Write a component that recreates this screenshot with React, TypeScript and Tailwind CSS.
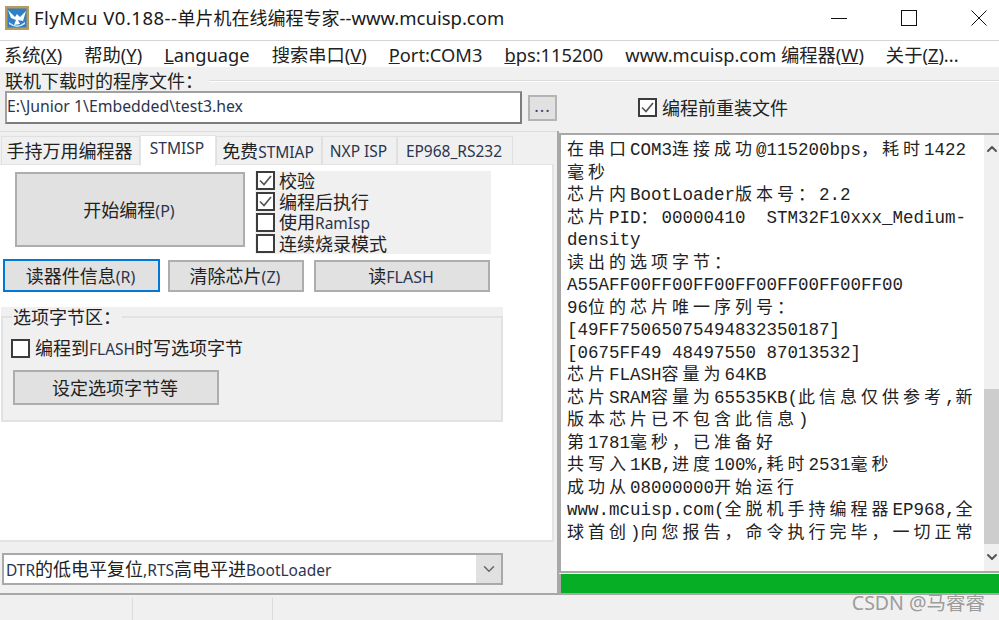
import React from 'react';
import { ChevronDown, ChevronUp } from 'lucide-react';

const sans = 'font-["Noto_Sans","Noto_Sans_CJK_SC",sans-serif]';

const logLines = [
  '在串口COM3连接成功@115200bps，耗时1422',
  '毫秒',
  '芯片内BootLoader版本号：2.2',
  '芯片PID：00000410  STM32F10xxx_Medium-',
  'density',
  '读出的选项字节：',
  'A55AFF00FF00FF00FF00FF00FF00FF00',
  '96位的芯片唯一序列号：',
  '[49FF75065075494832350187]',
  '[0675FF49 48497550 87013532]',
  '芯片FLASH容量为64KB',
  '芯片SRAM容量为65535KB(此信息仅供参考,新',
  '版本芯片已不包含此信息)',
  '第1781毫秒，已准备好',
  '共写入1KB,进度100%,耗时2531毫秒',
  '成功从08000000开始运行',
  'www.mcuisp.com(全脱机手持编程器EP968,全',
  '球首创)向您报告，命令执行完毕，一切正常',
];

// CJK and latin runs need different sizes, the old app mixes two fonts
function Runs({ text, cjk, latin }: { text: string; cjk: string; latin: string }) {
  const parts = text.split(/([\u2E80-\uFFEF]+)/).filter(Boolean);
  return (
    <>
      {parts.map((p, i) => (
        <span key={i} className={/[\u2E80-\uFFEF]/.test(p) ? cjk : latin}>
          {p}
        </span>
      ))}
    </>
  );
}

function Label({ text }: { text: string }) {
  return <Runs text={text} cjk="inline-block text-[18px]" latin="inline-block text-[15.5px] text-[#2b3550]" />;
}

function Check({ checked }: { checked?: boolean }) {
  return (
    <span className="flex h-[19px] w-[19px] shrink-0 items-center justify-center border-2 border-[#3c3c3c] bg-white">
      {checked && (
        <svg width="15" height="15" viewBox="0 0 15 15" fill="none">
          <path d="M2 7.5 L6 11.5 L13 3" stroke="#555" strokeWidth="1.7" />
        </svg>
      )}
    </span>
  );
}

function CheckRow({ text, checked }: { text: string; checked?: boolean }) {
  return (
    <div className="flex h-[21px] items-center gap-[5px] leading-none">
      <Check checked={checked} />
      <span className="-ml-[1px]">
        <Label text={text} />
      </span>
    </div>
  );
}

function Btn({ text, className }: { text: string; className: string }) {
  return (
    <button className={`flex items-center justify-center border-2 border-[#adadad] bg-[#e1e1e1] pr-[2px] leading-none ${className}`}>
      <span>
        <Runs text={text} cjk="text-[18px]" latin="text-[16px] text-[#2b3550]" />
      </span>
    </button>
  );
}

function Tab({ text, className, active }: { text: string; className: string; active?: boolean }) {
  if (active) {
    return (
      <div className={`z-10 flex h-[31px] items-center justify-center border-x border-t border-[#e4e4e4] bg-white pr-[2px] pb-[5px] leading-none ${className}`}>
        <span>
          <Label text={text} />
        </span>
      </div>
    );
  }
  return (
    <div className={`mt-[1px] flex h-[29px] items-center justify-center border border-b-0 border-[#e0e0e0] bg-[#f0f0f0] pr-[2px] leading-none ${className}`}>
      <span>
        <Label text={text} />
      </span>
    </div>
  );
}

function Logo() {
  return (
    <svg width="24" height="24" viewBox="0 0 24 24" className="shrink-0">
      <rect x="0" y="0" width="24" height="24" fill="#b89b5e" />
      <rect x="2.5" y="2.5" width="19" height="19" fill="#2f7fc4" />
      <path d="M3 4 L10 11 L12 8 L15 11 L21 5 L18 15 L13 14 L15 18 L9 19 L11 14 L6 12 Z" fill="#fff" />
      <path d="M4 16 Q12 23 20 16 L20 18 Q12 24 4 18 Z" fill="#d6e8f6" />
    </svg>
  );
}

export default function App() {
  return (
    <div className={`flex h-[620px] w-[999px] flex-col overflow-hidden bg-[#f0f0f0] text-[#222] ${sans}`}>
      {/* title bar */}
      <div className="flex h-[41px] items-center border-b border-[#d4d4d4] bg-white pl-[5px] pb-[5px]">
        <Logo />
        <span className="ml-[5px] text-[18.5px] whitespace-nowrap text-[#1a1a1a]">
          <span className="tracking-[0.5px]">FlyMcu V0.188--</span>
          <span className="text-[18px]">单片机在线编程专家</span>
          <span>--www.mcuisp.com</span>
        </span>
        <div className="ml-auto mr-[12px] flex items-center gap-[54px]">
          <svg width="16" height="16" viewBox="0 0 16 16" className="block"><path d="M0 8.5 H16" stroke="#111" /></svg>
          <svg width="16" height="16" viewBox="0 0 16 16" className="block"><rect x="0.5" y="0.5" width="15" height="15" fill="none" stroke="#111" /></svg>
          <svg width="16" height="16" viewBox="0 0 16 16" className="block"><path d="M0.5 0.5 L15.5 15.5 M15.5 0.5 L0.5 15.5" stroke="#111" /></svg>
        </div>
      </div>

      {/* menu */}
      <div className="flex h-[26px] items-center gap-[22px] bg-white pl-[4px] pt-[1px] text-[18.3px] whitespace-nowrap text-[#222]">
        <span>系统(<u>X</u>)</span>
        <span>帮助(<u>Y</u>)</span>
        <span><u>L</u>anguage</span>
        <span>搜索串口(<u>V</u>)</span>
        <span><u>P</u>ort:COM3</span>
        <span><u>b</u>ps:115200</span>
        <span>www.mcuisp.com 编程器(<u>W</u>)</span>
        <span>关于(<u>Z</u>)...</span>
      </div>

      {/* file row */}
      <div className="flex h-[64px] flex-col pl-[5px]">
        <div className="mt-[4px] flex h-[20px] items-center leading-none">
          <span className="text-[18px] whitespace-nowrap">联机下载时的程序文件：</span>
          <div className="ml-[6px] h-[2px] flex-1 border-t border-[#dcdcdc] bg-white" />
        </div>
        <div className="flex items-center">
          <div className="flex h-[33px] w-[517px] items-center border-2 border-t-[#a0a0a0] border-l-[#a0a0a0] border-r-[#7d7d7d] border-b-[#7d7d7d] bg-white pb-[2px] leading-none">
            <span className="text-[15.8px] text-[#2b3550]">E:\Junior 1\Embedded\test3.hex</span>
          </div>
          <button className="ml-[6px] flex h-[26px] w-[29px] items-end justify-center border-2 border-[#b4b4b4] bg-[#e1e1e1] pb-[5px] text-[17px] leading-none tracking-[1px] text-[#4a3f6b]">
            ...
          </button>
          <div className="ml-[81px]">
            <div className="flex items-center gap-[5px] leading-none">
              <Check checked />
              <span className="text-[18px] whitespace-nowrap">编程前重装文件</span>
            </div>
          </div>
        </div>
      </div>

      {/* main */}
      <div className="flex h-[464px] border-b-2 border-[#a8a8a8]">
        <div className="flex w-[557px] flex-col border-t border-[#dcdcdc]">
          <div className="mt-[3px] flex h-[29px] pl-[1px] whitespace-nowrap">
            <Tab text="手持万用编程器" className="w-[139px]" />
            <Tab text="STMISP" className="w-[76px]" active />
            <Tab text="免费STMIAP" className="w-[106px]" />
            <Tab text="NXP ISP" className="w-[75px]" />
            <Tab text="EP968_RS232" className="w-[116px]" />
          </div>
          <div className="h-[378px] w-[554px] border-r-2 border-b-2 border-t border-[#e4e4e4] bg-white pt-[6px]">
            <div className="flex">
              <Btn text="开始编程(P)" className="ml-[15px] mt-[1px] h-[75px] w-[230px]" />
              <div className="ml-[10px] h-[83px] w-[236px] bg-[#f0f0f0] pl-[1px]">
                <div className="-mt-[1px]">
                  <CheckRow text="校验" checked />
                  <CheckRow text="编程后执行" checked />
                  <CheckRow text="使用RamIsp" />
                  <CheckRow text="连续烧录模式" />
                </div>
              </div>
            </div>
            <div className="mt-[5px] flex items-center pl-[3px]">
              <Btn text="读器件信息(R)" className="h-[33px] w-[157px] !border-[#0078d7]" />
              <Btn text="清除芯片(Z)" className="ml-[8px] h-[32px] w-[136px]" />
              <Btn text="读FLASH" className="ml-[10px] h-[32px] w-[176px]" />
            </div>
            <div className="ml-[1px] mt-[15px] h-[115px] w-[502px] bg-[#f0f0f0] pt-[1px]">
              <fieldset className="h-[114px] border-2 border-[#e2e2e2]">
                <legend className="ml-[9px] px-[1px] text-[18px] leading-[18px]">选项字节区：</legend>
                <div className="ml-[8px] mt-[13px] flex items-center gap-[5px] leading-none">
                  <Check />
                  <span>
                    <Label text="编程到FLASH时写选项字节" />
                  </span>
                </div>
                <Btn text="设定选项字节等" className="ml-[10px] mt-[12px] h-[35px] w-[206px]" />
              </fieldset>
            </div>
          </div>
          <div className="ml-[2px] mt-[11px] flex h-[32px] w-[501px] items-stretch border-2 border-[#a9a9a9] bg-white leading-none">
            <span className="flex flex-1 items-center pl-[2px] whitespace-nowrap">
              <span>
                <Label text="DTR的低电平复位,RTS高电平进BootLoader" />
              </span>
            </span>
            <span className="flex w-[25px] items-center justify-center bg-[#e1e1e1]">
              <ChevronDown size={18} className="text-[#666]" />
            </span>
          </div>
        </div>

        <div className="flex flex-1 flex-col border-l-2 border-[#a8a8a8]">
          <div className="mt-[2px] flex h-[440px] border-y-2 border-l-2 border-[#a8a8a8] bg-white">
            <div className='flex-1 pl-[6px] pt-[4px] font-["Liberation_Mono","Noto_Sans_CJK_SC",monospace] text-[17.5px] leading-[22.5px] whitespace-pre text-[#222]'>
              {logLines.map((line, i) => (
                <div key={i} className="h-[22.5px]">
                  <Runs text={line} cjk="text-[17px] tracking-[4px]" latin="" />
                </div>
              ))}
            </div>
            <div className="flex w-[15px] flex-col items-center bg-[#f0f0f0]">
              <ChevronUp size={16} strokeWidth={3} className="mt-[6px] text-[#555]" />
              <div className="mt-[232px] h-[155px] w-full bg-[#cdcdcd]" />
              <ChevronDown size={16} strokeWidth={3} className="mt-[5px] text-[#555]" />
            </div>
          </div>
          <div className="mt-[1px] h-[19px] border-l-2 border-[#a8a8a8] bg-[#06ae26]" />
        </div>
      </div>

      {/* status bar */}
      <div className="flex h-[25px] items-stretch">
        <div className="mt-[3px] w-[133px] border-r border-[#dcdcdc]" />
        <div className="mt-[3px] w-[140px] border-r border-[#dcdcdc]" />
        <span className="ml-auto flex items-center pr-[14px] pb-[9px] text-[19.5px] leading-none text-[#9c9c9c]">CSDN @马睿睿</span>
      </div>
    </div>
  );
}
